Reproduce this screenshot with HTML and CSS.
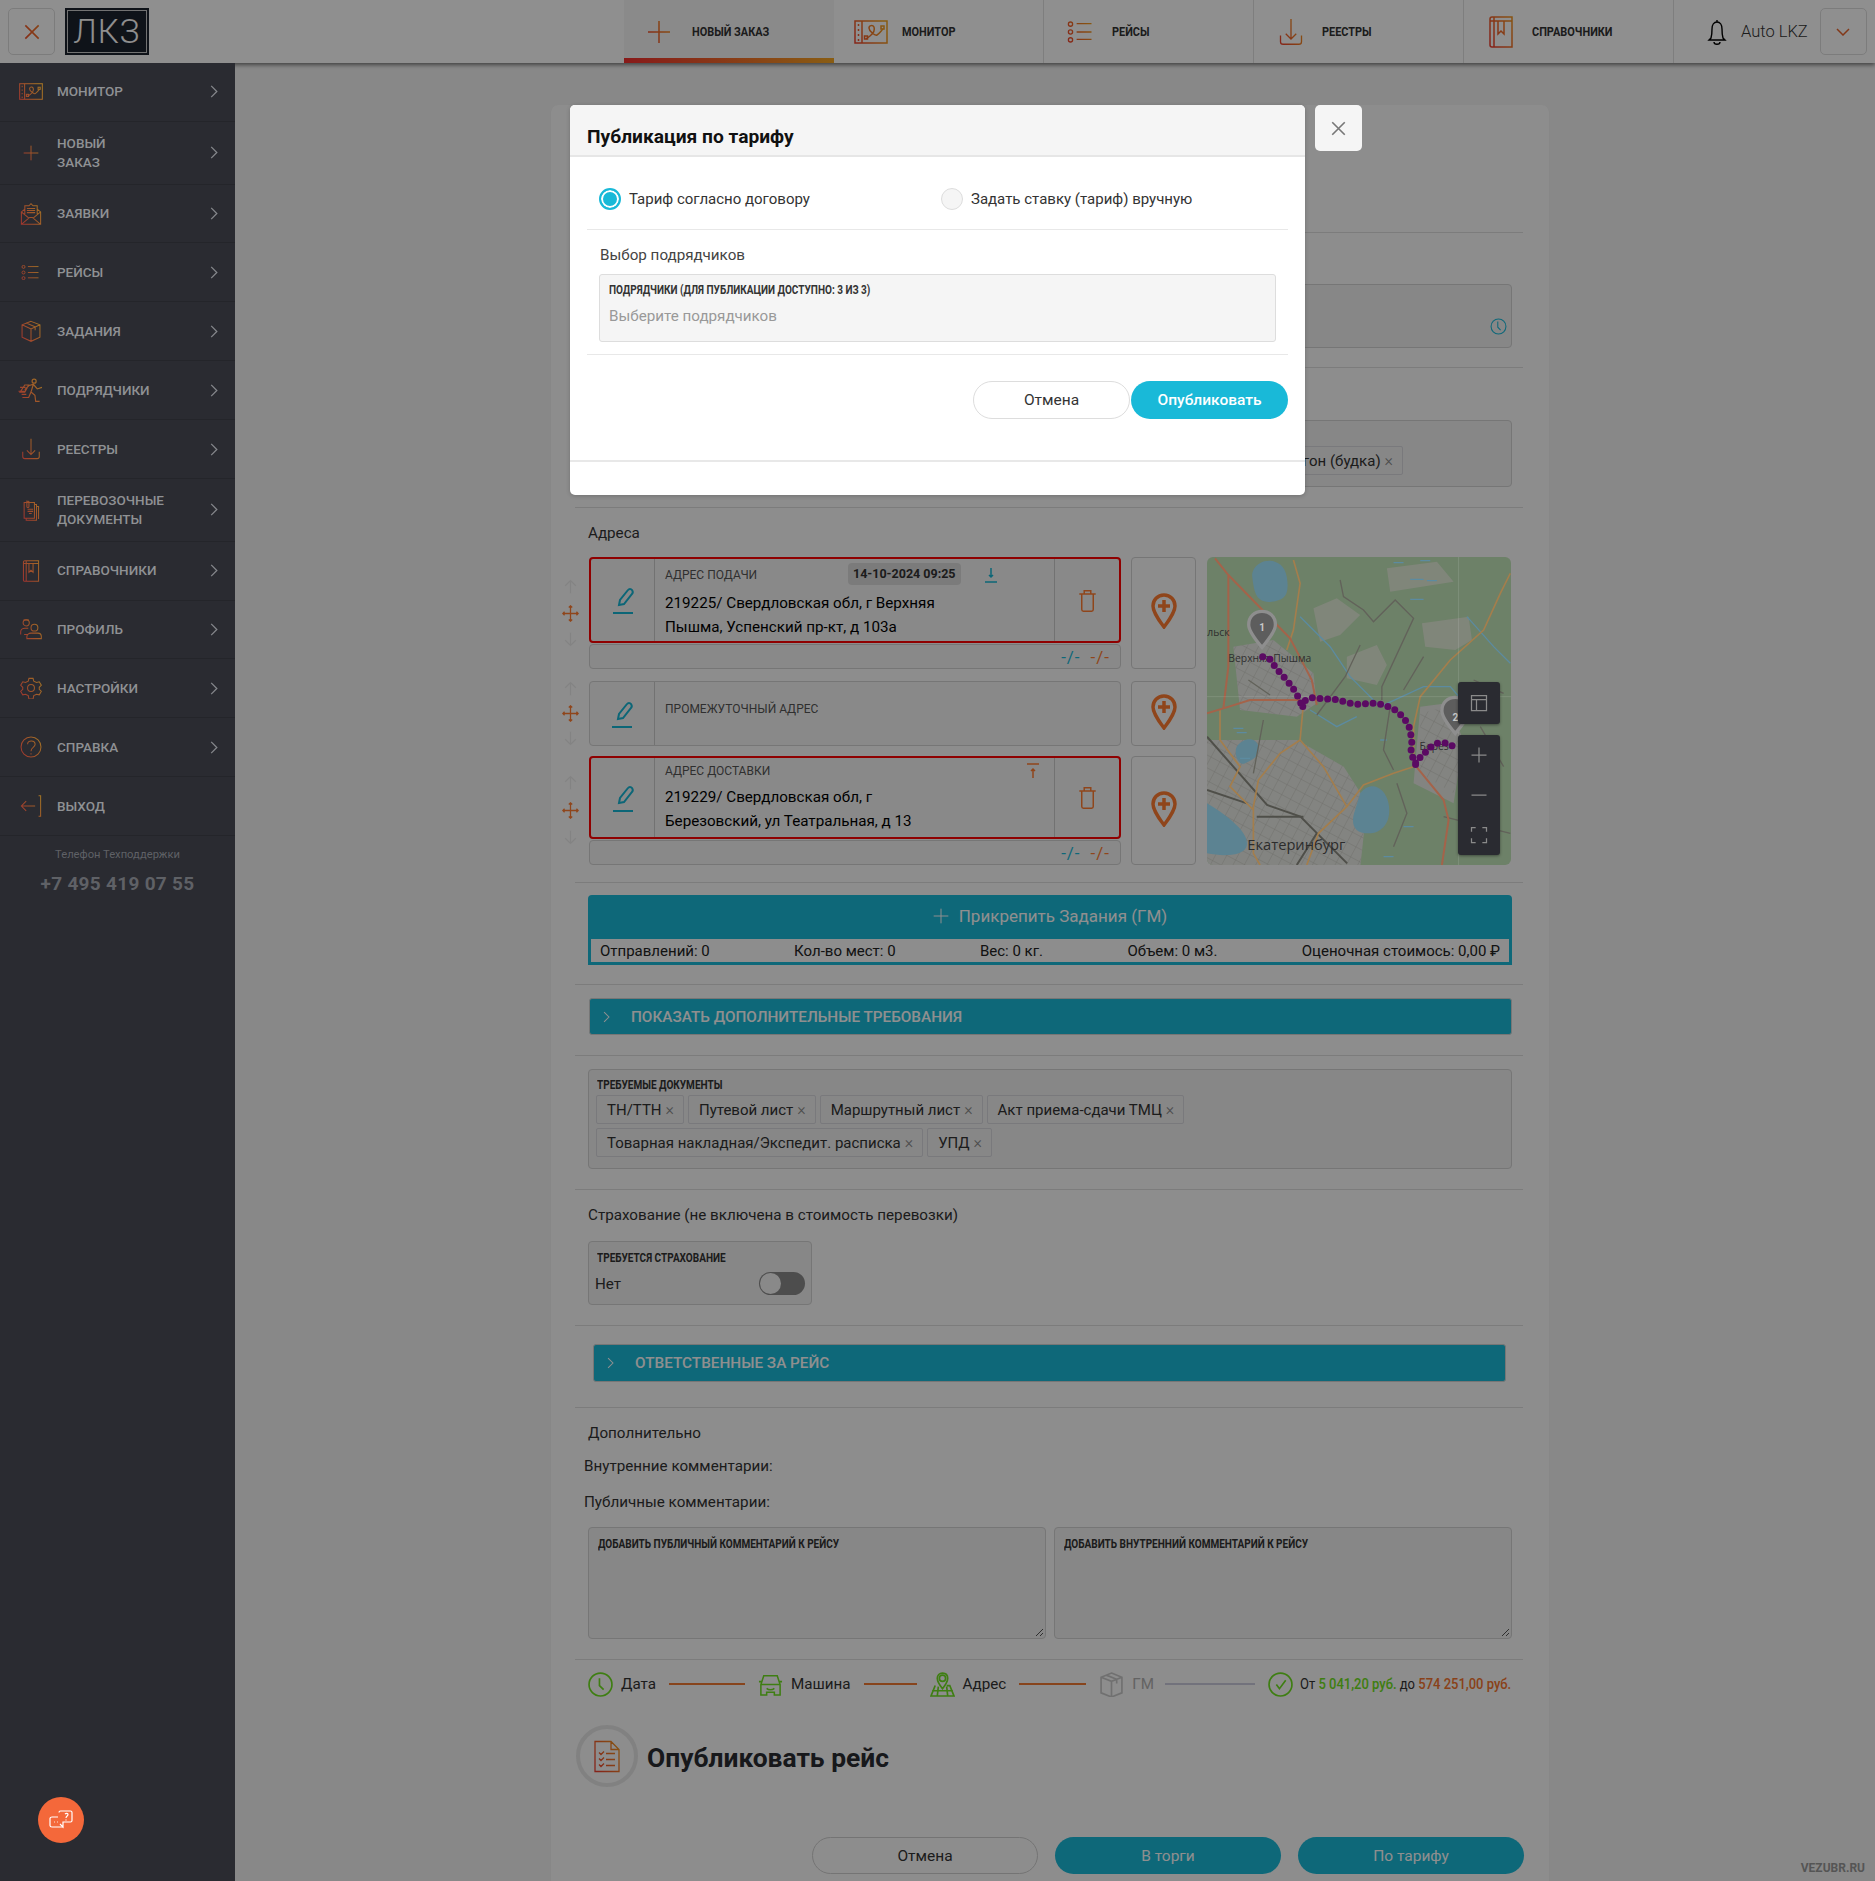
FILE: index.html
```html
<!DOCTYPE html>
<html lang="ru">
<head>
  <meta charset="utf-8">
  <title>Публикация по тарифу</title>
  <link rel="stylesheet" href="styles.css">
</head>
<body>
  <svg class="defs" aria-hidden="true">
    <defs>
      <linearGradient id="ig" gradientUnits="userSpaceOnUse" x1="0" y1="24" x2="32" y2="8">
        <stop offset="0" stop-color="#ee3f2e"/>
        <stop offset="1" stop-color="#f2a21e"/>
      </linearGradient>
      <pattern id="streets" width="30" height="34" patternUnits="userSpaceOnUse" patternTransform="rotate(28)">
        <path d="M0 0h30M0 0v34" stroke="#6e6e6a" stroke-width="2.500" fill="none"/>
      </pattern>
      <symbol id="i-monitor" viewBox="0 0 34 24"><rect x="1" y="1" width="32" height="22"/><path d="M8 1v22M4.500 4v2M4.500 9v2M4.500 14v2M4.500 19v2M12 19l4-3c4-3 5-6 4-9-1-2-5-2-5 1 0 3 6 8 8 7s4-4 6-6"/><rect x="10.500" y="16" width="3" height="3"/><rect x="27" y="6" width="3" height="3"/></symbol>
      <symbol id="i-plus" viewBox="0 0 24 24"><path d="M12 1v22M1 12h22"/></symbol>
      <symbol id="i-list" viewBox="0 0 32 24"><circle cx="4" cy="3" r="2.400"/><circle cx="4" cy="12" r="2.400"/><circle cx="4" cy="21" r="2.400"/><path d="M11 2.500h17M11 12h17M11 20.500h17"/></symbol>
      <symbol id="i-down" viewBox="0 0 32 32"><path d="M16 1v23M10 18l6 6 6-6M4 20v7c0 2 1 3 3 3h18c2 0 3-1 3-3v-7"/></symbol>
      <symbol id="i-book" viewBox="0 0 24 32"><path d="M3 1h20v30H3c-1 0-2-1-2-2V3c0-1 1-2 2-2zM1 5h22M5 1v30M9 5v13l3-3 3 3V5"/></symbol>
      <symbol id="i-mail" viewBox="0 0 32 32"><path d="M2 13v18h28V13l-5-4M7 9l-5 4 11 9M30 13l-11 9M2 31l12-10h4l12 10M7 16V4h6l3-3 3 3h6v12M10 8h12M10 11h12M10 14h12"/></symbol>
      <symbol id="i-box" viewBox="0 0 32 32"><path d="M16 2l13 5v18l-13 6-13-6V7zM3 7l13 6 13-6M16 13v18M9 4.500l13 5.500v5"/></symbol>
      <symbol id="i-run" viewBox="0 0 34 32"><circle cx="21" cy="4" r="2.600"/><path d="M14 10l6-2 5 6 6-2M20 8l-3 10 5 4 1 8 5 0M17 18l-3 7-8 0M14 10l-5 5M3 12h7M1 17h8M5 21h6M9 9h5l-5 9H3z"/></symbol>
      <symbol id="i-docs" viewBox="0 0 24 32"><path d="M2 5h15v23H2zM17 8h3v23H5v-3M20 11h3v18M6 2v9c0 2 3 2 3 0V4c0-1-2-1-2 0M7 15h8M7 18h8M9 21h4"/></symbol>
      <symbol id="i-users" viewBox="0 0 32 32"><circle cx="9" cy="7" r="4.500"/><path d="M1 24v-4c0-3 3-5 6-5h5M5 3h8"/><circle cx="21" cy="14" r="5"/><path d="M10 30v-3c0-3 3-5 6-5h10c3 0 5 2 5 5v3zM6 24h6"/></symbol>
      <symbol id="i-gear" viewBox="0 0 32 32"><circle cx="16" cy="16" r="5"/><path d="M13 2h6l1 4 4 2 4-1 3 5-3 3v3l3 3-3 5-4-1-4 2-1 5h-6l-1-5-4-2-4 1-3-5 3-3v-3l-3-3 3-5 4 1 4-2z"/></symbol>
      <symbol id="i-help" viewBox="0 0 32 32"><circle cx="16" cy="16" r="14.500"/><path d="M11 12c0-7 11-6 11 0 0 5-6 4-6 10M16 25v2"/></symbol>
      <symbol id="i-exit" viewBox="0 0 32 32"><path d="M27 1h3v30h-3M2 16h20M9 9l-7 7 7 7"/></symbol>
      <symbol id="i-chev" viewBox="0 0 10 16"><path d="M1.500 1l7 7-7 7"/></symbol>
      <symbol id="i-edit" viewBox="0 0 24 28"><path d="M8 18l1-5 8-10c1-1.500 3-1.500 4 0s1 3 0 4l-8 10zM2 26h20"/></symbol>
      <symbol id="i-trash" viewBox="0 0 22 28"><path d="M1 6h20M4 6v19c0 1 1 2 2 2h10c1 0 2-1 2-2V6M7 6V2h8v4"/></symbol>
      <symbol id="i-pin" viewBox="0 0 26 36"><path d="M13 2C6.500 2 2 7 2 13c0 7 11 21 11 21s11-14 11-21C24 7 19.500 2 13 2z"/><path d="M13 7v12M7 13h12"/></symbol>
      <symbol id="i-move" viewBox="0 0 20 20"><path d="M10 1v18M1 10h18M8 3l2-2 2 2M8 17l2 2 2-2M3 8l-2 2 2 2M17 8l2 2-2 2"/></symbol>
      <symbol id="i-up" viewBox="0 0 16 20"><path d="M8 19V2M1 9l7-7 7 7"/></symbol>
      <symbol id="i-dn" viewBox="0 0 16 20"><path d="M8 1v17M1 11l7 7 7-7"/></symbol>
      <symbol id="i-load" viewBox="0 0 14 16"><path d="M7 1v9M5 8l2 2 2-2M1 15h12"/></symbol>
      <symbol id="i-unload" viewBox="0 0 14 16"><path d="M1 1h12M7 15V6M5 8l2-2 2 2"/></symbol>
      <symbol id="i-x" viewBox="0 0 12 12"><path d="M1 1l10 10M11 1L1 11"/></symbol>
      <symbol id="i-clock" viewBox="0 0 24 24"><circle cx="12" cy="12" r="10.500"/><path d="M11 5v8l4 4"/></symbol>
    </defs>
  </svg>

  <header class="topbar">
    <button class="sq-btn"><svg class="ic-x"><use href="#i-x"/></svg></button>
    <div class="logo"><span>ЛКЗ</span></div>
    <nav class="topnav">
      <a class="tab tab-active"><svg class="tab-ico w24"><use href="#i-plus"/></svg><span>Новый заказ</span></a>
      <a class="tab"><svg class="tab-ico w34"><use href="#i-monitor"/></svg><span>Монитор</span></a>
      <a class="tab"><svg class="tab-ico w28"><use href="#i-list"/></svg><span>Рейсы</span></a>
      <a class="tab"><svg class="tab-ico w28 tall"><use href="#i-down"/></svg><span>Реестры</span></a>
      <a class="tab"><svg class="tab-ico w28 tall"><use href="#i-book"/></svg><span>Справочники</span></a>
    </nav>
    <div class="user">
      <svg class="bell" viewBox="0 0 24 28"><path d="M12 2v2M6 20c1-3 1-6 1-9 0-4 2-7 5-7s5 3 5 7c0 3 0 6 1 9l2 2H4zM9 24c0 3 6 3 6 0"/></svg>
      <span>Auto LKZ</span>
      <button class="sq-btn"><svg class="ic-v" viewBox="0 0 14 8"><path d="M1 1l6 6 6-6"/></svg></button>
    </div>
  </header>

  <div class="layout">
    <aside class="sidebar">
      <a class="side-item"><svg class="side-ico side-wide"><use href="#i-monitor"/></svg><span>Монитор</span><svg class="chev"><use href="#i-chev"/></svg></a>
      <a class="side-item two"><svg class="side-ico side-plus"><use href="#i-plus"/></svg><span>Новый<br>заказ</span><svg class="chev"><use href="#i-chev"/></svg></a>
      <a class="side-item"><svg class="side-ico"><use href="#i-mail"/></svg><span>Заявки</span><svg class="chev"><use href="#i-chev"/></svg></a>
      <a class="side-item"><svg class="side-ico side-list"><use href="#i-list"/></svg><span>Рейсы</span><svg class="chev"><use href="#i-chev"/></svg></a>
      <a class="side-item"><svg class="side-ico"><use href="#i-box"/></svg><span>Задания</span><svg class="chev"><use href="#i-chev"/></svg></a>
      <a class="side-item"><svg class="side-ico side-run"><use href="#i-run"/></svg><span>Подрядчики</span><svg class="chev"><use href="#i-chev"/></svg></a>
      <a class="side-item"><svg class="side-ico"><use href="#i-down"/></svg><span>Реестры</span><svg class="chev"><use href="#i-chev"/></svg></a>
      <a class="side-item two"><svg class="side-ico"><use href="#i-docs"/></svg><span>Перевозочные<br>документы</span><svg class="chev"><use href="#i-chev"/></svg></a>
      <a class="side-item"><svg class="side-ico"><use href="#i-book"/></svg><span>Справочники</span><svg class="chev"><use href="#i-chev"/></svg></a>
      <a class="side-item"><svg class="side-ico"><use href="#i-users"/></svg><span>Профиль</span><svg class="chev"><use href="#i-chev"/></svg></a>
      <a class="side-item"><svg class="side-ico"><use href="#i-gear"/></svg><span>Настройки</span><svg class="chev"><use href="#i-chev"/></svg></a>
      <a class="side-item"><svg class="side-ico"><use href="#i-help"/></svg><span>Справка</span><svg class="chev"><use href="#i-chev"/></svg></a>
      <a class="side-item"><svg class="side-ico"><use href="#i-exit"/></svg><span>Выход</span></a>
      <div class="support">
        <div class="support-label">Телефон Техподдержки</div>
        <div class="support-phone">+7 495 419 07 55</div>
      </div>
    </aside>

    <main class="main">
      <section class="card">
        <div class="sec sec-head"></div>

        <div class="sec sec-date">
          <div class="box box-date"><svg class="clock-teal"><use href="#i-clock"/></svg></div>
        </div>

        <div class="sec sec-type">
          <div class="box box-type"><span class="tag tag-cut">Фургон (будка) <i>×</i></span></div>
        </div>

        <div class="sec sec-addr">
          <div class="sec-title">Адреса</div>
          <div class="addr-grid">
            <div class="addr-list">
              <div class="addr-row row-1">
                <div class="handle"><svg class="h-arrow"><use href="#i-up"/></svg><svg class="h-move"><use href="#i-move"/></svg><svg class="h-arrow"><use href="#i-dn"/></svg></div>
                <div class="addr-main">
                  <div class="addr-box err box-1">
                    <div class="addr-edit"><svg class="ic-edit"><use href="#i-edit"/></svg></div>
                    <div class="addr-text">
                      <div class="addr-label"><span>Адрес подачи</span><b class="addr-date">14-10-2024 09:25</b><svg class="ic-load teal"><use href="#i-load"/></svg></div>
                      <div class="addr-value">219225/ Свердловская обл, г Верхняя<br>Пышма, Успенский пр-кт, д 103а</div>
                    </div>
                    <div class="addr-del"><svg class="ic-trash"><use href="#i-trash"/></svg></div>
                  </div>
                  <div class="addr-sub"><span class="t">-/-</span><span class="o">-/-</span></div>
                </div>
                <div class="pin-box"><svg class="ic-pin"><use href="#i-pin"/></svg></div>
              </div>

              <div class="addr-row row-2">
                <div class="handle"><svg class="h-arrow"><use href="#i-up"/></svg><svg class="h-move"><use href="#i-move"/></svg><svg class="h-arrow"><use href="#i-dn"/></svg></div>
                <div class="addr-main">
                  <div class="addr-box box-2">
                    <div class="addr-edit"><svg class="ic-edit"><use href="#i-edit"/></svg></div>
                    <div class="addr-text"><div class="addr-label mid"><span>Промежуточный адрес</span></div></div>
                  </div>
                </div>
                <div class="pin-box"><svg class="ic-pin"><use href="#i-pin"/></svg></div>
              </div>

              <div class="addr-row row-3">
                <div class="handle"><svg class="h-arrow"><use href="#i-up"/></svg><svg class="h-move"><use href="#i-move"/></svg><svg class="h-arrow"><use href="#i-dn"/></svg></div>
                <div class="addr-main">
                  <div class="addr-box err box-3">
                    <div class="addr-edit"><svg class="ic-edit"><use href="#i-edit"/></svg></div>
                    <div class="addr-text">
                      <div class="addr-label"><span>Адрес доставки</span><svg class="ic-load orange"><use href="#i-unload"/></svg></div>
                      <div class="addr-value">219229/ Свердловская обл, г<br>Березовский, ул Театральная, д 13</div>
                    </div>
                    <div class="addr-del"><svg class="ic-trash"><use href="#i-trash"/></svg></div>
                  </div>
                  <div class="addr-sub"><span class="t">-/-</span><span class="o">-/-</span></div>
                </div>
                <div class="pin-box"><svg class="ic-pin"><use href="#i-pin"/></svg></div>
              </div>
            </div>

            <div class="map">
              <svg class="map-svg" viewBox="51 51 911 924" preserveAspectRatio="none">
                <rect x="51" y="51" width="911" height="924" fill="#6d8168"/>
                <path d="M370 205l70-30 70 50-60 60-60 20zM470 350l90-35 30 60-30 60-90-20zM695 250l140-20 10 70-50 30-90-10zM590 85l150-20 50 60-190 30z" fill="#80867a"/>
                <path d="M130 320l120-20 120 100 10 90-60 40-170-20zM51 600l270 0 140 80 70 110-20 185H51zM690 500l80-10 50 110-30 190-120-60z" fill="#838481"/>
                <path d="M130 320l120-20 120 100 10 90-60 40-170-20zM51 600l270 0 140 80 70 110-20 185H51zM690 520l80-20 50 110-30 150-100-60z" fill="url(#streets)"/>
                <path d="M190 90c20-40 90-40 100 20s-10 70-45 75-50-15-55-50 -5-30 0-45zM510 760c30-40 75-20 85 30s-15 90-60 90-55-30-40-70zM51 790c50 30 120 80 120 120s-70 40-120 30zM140 620c20-30 60-30 65 0s-20 40-40 50-35-30-25-50z" fill="#5c8392"/>
                <g fill="none" stroke="#5c8ba0" stroke-width="4">
                  <path d="M330 230l90 90 60 90 90 90 130-60 80 0 60 70M830 230l80 90 50 50M360 510l80 50 60-30"/>
                  <path d="M610 68h30M690 62h30M660 118h40M710 122h30M660 178h40M130 565h30M140 578h30M150 655h30M570 600h20M640 860h30M580 950h30"/>
                </g>
                <g fill="none" stroke="#62625a" stroke-width="4">
                  <path d="M450 120l10 50 60 40 30 35 65-65 55 55-95 205 0 40M510 315l-45 95-85 115M220 540l-30 160M175 420l65 45M760 830l200 50M600 500l-20 130 30 60M700 350l-60 100M870 560l70 120M850 420l90 40M620 730l30 90-40 100"/>
                  <path d="M51 590l180 205 100 35 50 50 90 90" stroke="#4f4f49" stroke-width="6"/>
                  <path d="M200 830h140M51 750l120 40M380 880l-60 95" stroke="#4f4f49" stroke-width="6"/>
                </g>
                <g fill="none" stroke="#a47e4c" stroke-width="5">
                  <path d="M310 60l20 70-20 140-20 60M960 100l-30 60-50 110-100 90-90 110-20 90v120l-60 20-90 35-50 65-85 80-35 95M330 600l-60 40-65 80-15 80v140l20 35M330 600l70 80 70 120M90 510v90l60 80-30 60 70 70M330 600l10-110"/>
                </g>
                <g fill="none" stroke="#a4634a" stroke-width="6">
                  <path d="M75 55l40 50 185 190 65 125 15 75M115 105v275l-15 125M51 520l49-15 80-25h150M680 682l80 98 15 60-20 135"/>
                </g>
                <path d="M51 470h911M805 51v924" stroke="#ffffff" stroke-opacity=".18" stroke-width="2"/>
                <text x="52" y="288" class="map-lbl">льск</text>
                <text x="115" y="366" class="map-lbl">Верхняя Пышма</text>
                <text x="688" y="630" class="map-lbl">Берез</text>
                <text x="172" y="930" class="map-city">Екатеринбург</text>
                <path d="M216 322c-30-35-40-55-40-68 0-25 18-40 40-40s40 15 40 40c0 13-10 33-40 68z" fill="#5d5d5d" stroke="#8e8e8e" stroke-width="10"/>
                <text x="216" y="272" class="map-num">1</text>
                <path d="M795 580c-30-35-40-55-40-68 0-25 18-40 40-40s40 15 40 40c0 13-10 33-40 68z" fill="#5d5d5d" stroke="#8e8e8e" stroke-width="10"/>
                <text x="795" y="543" class="map-num">2</text>
                <polyline class="route" points="218,350 240,358 252,376 268,396 285,415 300,433 316,456 328,478 338,505 338,485 362,473 388,475 412,477 438,479 462,485 486,491 510,493 536,490 560,489 585,497 608,505 628,520 645,540 657,562 662,585 665,610 662,635 670,660 680,682 675,665 695,648 712,630 732,612 752,608 773,610 793,622"/>
              </svg>
              <div class="map-ctl ctl-1"><svg viewBox="0 0 24 24"><path d="M3 3h18v18H3zM3 8h18M9 8v13"/></svg></div>
              <div class="map-ctl ctl-2">
                <svg viewBox="0 0 24 24"><path d="M12 3v18M3 12h18"/></svg>
                <svg viewBox="0 0 24 24"><path d="M3 12h18"/></svg>
                <svg viewBox="0 0 24 24"><path d="M8 3H3v5M16 3h5v5M8 21H3v-5M16 21h5v-5"/></svg>
              </div>
            </div>
          </div>
        </div>

        <div class="sec sec-attach">
          <button class="attach"><svg class="attach-plus"><use href="#i-plus"/></svg>Прикрепить Задания (ГМ)</button>
          <div class="attach-info">
            <span>Отправлений: 0</span><span>Кол-во мест: 0</span><span>Вес: 0 кг.</span><span>Объем: 0 м3.</span><span>Оценочная стоимось: 0,00 ₽</span>
          </div>
        </div>

        <div class="sec sec-acc1">
          <div class="accordion"><svg class="acc-chev"><use href="#i-chev"/></svg>Показать дополнительные требования</div>
        </div>

        <div class="sec sec-docs">
          <div class="box box-docs">
            <div class="mini-label">Требуемые документы</div>
            <div class="tags">
              <span class="tag">ТН/ТТН <i>×</i></span>
              <span class="tag">Путевой лист <i>×</i></span>
              <span class="tag">Маршрутный лист <i>×</i></span>
              <span class="tag">Акт приема-сдачи ТМЦ <i>×</i></span>
              <span class="tag">Товарная накладная/Экспедит. расписка <i>×</i></span>
              <span class="tag">УПД <i>×</i></span>
            </div>
          </div>
        </div>

        <div class="sec sec-ins">
          <div class="sec-title">Страхование (не включена в стоимость перевозки)</div>
          <div class="box box-ins">
            <div class="mini-label">Требуется страхование</div>
            <div class="ins-row"><span>Нет</span><span class="toggle"></span></div>
          </div>
        </div>

        <div class="sec sec-acc2">
          <div class="accordion acc-narrow"><svg class="acc-chev"><use href="#i-chev"/></svg>Ответственные за рейс</div>
        </div>

        <div class="sec sec-extra">
          <div class="sec-title">Дополнительно</div>
          <div class="comment-line first">Внутренние комментарии:</div>
          <div class="comment-line">Публичные комментарии:</div>
          <div class="comment-grid">
            <div class="box box-note"><div class="mini-label">Добавить публичный комментарий к рейсу</div><svg class="resize" viewBox="0 0 8 8"><path d="M1 8l7-7M5 8l3-3"/></svg></div>
            <div class="box box-note"><div class="mini-label">Добавить внутренний комментарий к рейсу</div><svg class="resize" viewBox="0 0 8 8"><path d="M1 8l7-7M5 8l3-3"/></svg></div>
          </div>
        </div>

        <div class="progress">
          <svg class="pg-ico green" viewBox="0 0 24 24"><circle cx="12" cy="12" r="11"/><path d="M11 6v7l4 4"/></svg>
          <span class="pg-txt">Дата</span>
          <i class="pg-line l1"></i>
          <svg class="pg-ico green" viewBox="0 0 26 24"><path d="M6 3h14l3 9v11h-6v-3H9v3H3V12zM3 12h20M1 9h3M22 9h3M9 16c2 2 6 2 8 0"/></svg>
          <span class="pg-txt">Машина</span>
          <i class="pg-line l2"></i>
          <svg class="pg-ico green" viewBox="0 0 24 24" preserveAspectRatio="none"><circle cx="12" cy="6" r="3"/><path d="M12 16C8 11 7 9 7 6c0-3 2-5 5-5s5 2 5 5c0 3-1 5-5 10zM5 13L1 23h22l-4-10h-3M2 18h20M8 14l-1 9M16 14l1 9"/></svg>
          <span class="pg-txt">Адрес</span>
          <i class="pg-line l3"></i>
          <svg class="pg-ico gray" viewBox="0 0 24 24"><path d="M12 1l10 4v15l-10 4-10-4V5zM2 5l10 4 10-4M12 9v15M7 3l10 4v4"/></svg>
          <span class="pg-txt muted">ГМ</span>
          <i class="pg-line l4"></i>
          <svg class="pg-ico green thin" viewBox="0 0 24 24"><circle cx="12" cy="12" r="11"/><path d="M8 12l3 4 6-8"/></svg>
          <span class="pg-price">От <b class="ok">5 041,20 руб.</b> до <b class="hot">574 251,00 руб.</b></span>
        </div>

        <div class="publish-head">
          <div class="publish-ico"><svg viewBox="0 0 26 32"><path d="M1 1h16l8 8v22H1zM17 1v8h8M5 12l2 2 3-3M12 13h9M5 18l2 2 3-3M12 19h9M5 24l2 2 3-3M12 25h9"/></svg></div>
          <h1>Опубликовать рейс</h1>
        </div>

        <div class="actions">
          <button class="btn btn-ghost">Отмена</button>
          <button class="btn btn-fill">В торги</button>
          <button class="btn btn-fill">По тарифу</button>
        </div>
      </section>
    </main>
  </div>

  <div class="overlay"></div>

  <div class="modal">
    <div class="modal-head">Публикация по тарифу</div>
    <div class="modal-radios">
      <label class="radio on"><i></i>Тариф согласно договору</label>
      <label class="radio"><i></i>Задать ставку (тариф) вручную</label>
    </div>
    <div class="modal-pick">
      <div class="pick-title">Выбор подрядчиков</div>
      <div class="pick-field">
        <div class="mini-label">Подрядчики (для публикации доступно: 3 из 3)</div>
        <div class="pick-holder">Выберите подрядчиков</div>
      </div>
    </div>
    <div class="modal-btns">
      <button class="mbtn">Отмена</button>
      <button class="mbtn mbtn-go">Опубликовать</button>
    </div>
  </div>
  <button class="modal-close"><svg><use href="#i-x"/></svg></button>

  <button class="chat-fab">
    <svg viewBox="0 0 24 24"><path d="M10 4.500c0-1 .5-1.500 1.500-1.500h10c1 0 1.500.5 1.500 1.500v8c0 1-.5 1.500-1.500 1.500H14v5l-3-3"/><path d="M9 9H3c-1 0-2 .5-2 1.500v7c0 1 1 1.500 2 1.500h11"/><path d="M16 6c1-1 3-1 3 .5S17 8 17 10M17 11.500v1M5 14h.8M8 14h.8"/></svg>
  </button>
  <div class="brand">VEZUBR.RU</div>
</body>
</html>
```

FILE: styles.css
```css
* {
  box-sizing: border-box;
}
html, body {
  margin: 0;
  height: 1881px;
  overflow: hidden;
}
body {
  position: relative;
  background: #f3f3f3;
  color: #222;
  font-family: Roboto, "Noto Sans", sans-serif;
  font-size: 15.2px;
}
button {
  font: inherit;
  cursor: pointer;
}
svg {
  display: block;
  fill: none;
  stroke: url(#ig);
  stroke-width: 1.5;
}
.defs {
  position: absolute;
  width: 0;
  height: 0;
}

/* top bar */
.topbar {
  display: flex;
  align-items: center;
  height: 63px;
  padding-left: 8px;
  background: #fff;
  box-shadow: 0 2px 4px rgba(0,0,0,.5);
  position: relative;
}
.sq-btn {
  width: 47px;
  height: 47px;
  display: flex;
  align-items: center;
  justify-content: center;
  background: transparent;
  border: 1px solid #ddd;
  border-radius: 5px;
  padding: 0;
}
.ic-x {
  width: 16px;
  height: 16px;
  stroke-width: 1.200;
}
.ic-v {
  width: 14px;
  height: 8px;
  stroke: #e8642c;
}
.logo {
  width: 84px;
  height: 47px;
  margin-left: 10px;
  padding: 2px;
  background: #1c232e;
}
.logo span {
  display: flex;
  align-items: center;
  justify-content: center;
  height: 100%;
  border: 1px solid #ccc;
  color: #fff;
  font-size: 33px;
  font-weight: 300;
  letter-spacing: 1px;
}
.topnav {
  display: flex;
  margin-left: 475px;
  height: 63px;
}
.tab {
  display: flex;
  align-items: center;
  width: 210px;
  height: 63px;
  padding-left: 23px;
  border-right: 1px solid #e0e0e0;
  font-size: 13px;
  font-weight: 700;
  color: #333;
  text-transform: uppercase;
  position: relative;
}
.tab span {
  position: absolute;
  left: 68px;
  transform: scaleX(.84);
  transform-origin: left center;
  white-space: nowrap;
}
.tab-active {
  background: #f7f7f7;
  border-right: 0;
}
.tab-active::after {
  content: "";
  position: absolute;
  left: 0;
  right: 0;
  bottom: 0;
  height: 5px;
  background: linear-gradient(90deg, #f22e2e, #f5a623);
}
.tab-ico {
  flex: none;
  height: 24px;
}
.w24 { width: 24px; }
.w28 { width: 28px; }
.w34 { width: 34px; margin-left: -3px; }
.tall { height: 32px; }
.user {
  display: flex;
  align-items: center;
  margin-left: 31px;
  font-size: 16.500px;
  color: #333;
  font-weight: 300;
}
.bell {
  width: 24px;
  height: 28px;
  margin-right: 12px;
  stroke: #000;
  stroke-width: 1.400;
}
.user .sq-btn {
  margin-left: 12px;
}

/* layout */
.layout {
  display: flex;
  height: 1818px;
}
.sidebar {
  width: 235px;
  flex: none;
  background: #2a2b31;
  position: relative;
  z-index: 2;
}
.side-item {
  display: flex;
  align-items: center;
  height: 58.880px;
  padding-left: 14px;
  border-bottom: 1px solid #24252a;
  color: #8f9194;
  font-size: 13.500px;
  font-weight: 500;
  line-height: 19px;
  text-transform: uppercase;
}
.side-item.two {
  height: 62.700px;
}
.side-ico {
  width: 34px;
  height: 22px;
  flex: none;
  margin-right: 9px;
  opacity: .6;
}
.side-wide { height: 17px; }
.side-plus { height: 16px; }
.side-list { height: 15px; }
.side-run { height: 25px; }
.chev {
  width: 8px;
  height: 13px;
  margin-left: auto;
  margin-right: 17px;
  stroke: #85878b;
  stroke-width: 1.600;
}
.support {
  text-align: center;
  padding: 10px 0 0;
}
.support-label {
  color: #5f6166;
  font-size: 11.200px;
  line-height: 18px;
}
.support-phone {
  margin-top: 8px;
  color: #5f6166;
  font-size: 19px;
  font-weight: 700;
  letter-spacing: .3px;
}

/* form card */
.main {
  flex: 1;
  padding: 42px 0 0 315px;
}
.card {
  width: 1000px;
  height: 1800px;
  padding: 0 26px 0 24px;
  background: #fbfbfb;
  border-radius: 8px 8px 0 0;
  border: 1px solid #f0f0f0;
  border-width: 0 1px;
}
.sec {
  border-bottom: 1px solid #ddd;
  padding-left: 13px;
  padding-right: 11px;
}
.sec-head { height: 128px; }
.sec-date { padding-top: 51px; padding-bottom: 19px; }
.sec-type { padding-top: 52px; padding-bottom: 20px; }
.sec-addr { padding-top: 16px; padding-bottom: 17px; }
.sec-attach { padding-top: 12px; padding-bottom: 19px; }
.sec-acc1 { padding-top: 13px; padding-bottom: 20px; }
.sec-docs { padding-top: 13px; padding-bottom: 20px; }
.sec-ins { padding-top: 16px; padding-bottom: 20px; }
.sec-acc2 { padding-top: 18px; padding-bottom: 25px; }
.sec-extra { padding-top: 16px; padding-bottom: 20px; }
.sec-title {
  line-height: 18px;
  color: #333;
}
.box {
  background: #f0f0f0;
  border: 1px solid #d2d2d2;
  border-radius: 4px;
  position: relative;
}
.box-date {
  height: 64px;
}
.clock-teal {
  position: absolute;
  right: 4px;
  bottom: 12px;
  width: 17px;
  height: 17px;
  stroke: #19b9d8;
}
.box-type {
  height: 67px;
  display: flex;
  justify-content: flex-end;
  padding: 25px 108px 0 0;
}
.mini-label {
  font-size: 12px;
  font-weight: 700;
  color: #333;
  text-transform: uppercase;
  line-height: 14px;
  white-space: nowrap;
  transform: scaleX(.835);
  transform-origin: left center;
}
.tag {
  display: inline-flex;
  align-items: center;
  height: 29px;
  padding: 0 9px 0 10px;
  gap: 4px;
  border: 1px solid #d8d8de;
  border-radius: 2px;
  color: #333;
  font-size: 15px;
  white-space: nowrap;
}
.tag i {
  font-style: normal;
  font-weight: 300;
  color: #888;
  font-size: 16px;
}

/* addresses */
.addr-grid {
  display: flex;
  margin-top: 15px;
}
.addr-list {
  width: 636px;
  margin-left: -28px;
  flex: none;
}
.addr-row {
  display: flex;
}
.row-2 { margin-top: 12px; }
.row-3 { margin-top: 10px; }
.handle {
  width: 29px;
  flex: none;
  display: flex;
  flex-direction: column;
  align-items: center;
  justify-content: space-between;
  padding-right: 8px;
}
.row-1 .handle { padding-top: 22px; padding-bottom: 22px; }
.row-3 .handle { padding-top: 19px; padding-bottom: 20px; }
.h-arrow {
  width: 13px;
  height: 15px;
  opacity: .08;
  stroke: #333;
}
.h-move {
  width: 17px;
  height: 17px;
  stroke: #ff7c30;
}
.addr-main {
  width: 532px;
  flex: none;
}
.addr-box {
  display: flex;
  border: 1px solid #d2d2d2;
  background: #f5f5f5;
  border-radius: 4px;
}
.addr-box.err {
  border: 2px solid #ff0000;
}
.box-1 { height: 86px; }
.box-2 { height: 65px; }
.box-3 { height: 83px; }
.addr-edit {
  width: 64px;
  flex: none;
  border-right: 1px solid #ccc;
  display: flex;
  align-items: center;
  justify-content: center;
  padding-top: 2px;
}
.box-2 .addr-edit { width: 65px; }
.ic-edit {
  width: 24px;
  height: 28px;
  stroke: #17b6d4;
  stroke-width: 2;
}
.addr-text {
  flex: 1;
  padding: 8px 0 0 10px;
  min-width: 0;
}
.box-3 .addr-text {
  padding-top: 5px;
}
.addr-label {
  display: flex;
  align-items: center;
  height: 16px;
  color: #555;
  font-size: 12px;
  text-transform: uppercase;
  position: relative;
}
.addr-label.mid {
  margin-top: 11px;
}
.addr-date {
  position: absolute;
  left: 183px;
  top: -4px;
  padding: 3px 5px;
  border-radius: 4px;
  background: #dcdcdc;
  color: #333;
  font-size: 12.500px;
  line-height: 16px;
  white-space: nowrap;
}
.ic-load {
  position: absolute;
  width: 14px;
  height: 16px;
  stroke-width: 1.500;
}
.ic-load.teal {
  left: 319px;
  stroke: #17b6d4;
}
.ic-load.orange {
  right: 14px;
  stroke: #ff7c30;
}
.addr-value {
  margin-top: 8px;
  line-height: 24px;
  color: #000;
  white-space: nowrap;
}
.box-3 .addr-value {
  margin-top: 6px;
}
.addr-del {
  width: 65px;
  flex: none;
  border-left: 1px solid #ccc;
  display: flex;
  align-items: center;
  justify-content: center;
}
.ic-trash {
  width: 19px;
  height: 23px;
  stroke: #ff7c30;
  stroke-width: 1.800;
}
.addr-sub {
  height: 25px;
  margin-top: 1px;
  border: 1px solid #d2d2d2;
  border-radius: 4px;
  background: #f5f5f5;
  display: flex;
  justify-content: flex-end;
  align-items: center;
  gap: 10px;
  padding-right: 10px;
  font-size: 17px;
  letter-spacing: 1px;
}
.addr-sub .t { color: #19b9d8; }
.addr-sub .o { color: #ff7c30; }
.pin-box {
  width: 65px;
  margin-left: 10px;
  flex: none;
  border: 1px solid #d2d2d2;
  border-radius: 4px;
  display: flex;
  align-items: center;
  justify-content: center;
  padding-bottom: 4px;
}
.ic-pin {
  width: 26px;
  height: 36px;
  stroke: #ff7c30;
  stroke-width: 3.500;
}
.map {
  width: 304px;
  height: 308px;
  margin-left: 11px;
  border-radius: 6px;
  overflow: hidden;
  position: relative;
  z-index: 2;
}
.map-svg {
  width: 100%;
  height: 100%;
  stroke: none;
}
.map-lbl {
  font-family: "Open Sans", sans-serif;
  font-size: 31px;
  fill: #2f2f2f;
  stroke: none;
}
.map-city {
  font-family: "Open Sans", sans-serif;
  font-size: 44px;
  fill: #2c2c2c;
  stroke: none;
}
.map-num {
  font-family: Roboto, sans-serif;
  font-size: 30px;
  font-weight: 700;
  text-anchor: middle;
  fill: #c8c8c8;
  stroke: none;
}
.route {
  fill: none;
  stroke: #5b0a63;
  stroke-width: 21;
  stroke-linecap: round;
  stroke-dasharray: 0 23;
}
.map-ctl {
  position: absolute;
  left: 251px;
  width: 42px;
  background: #2a2b31;
  border-radius: 3px;
  display: flex;
  flex-direction: column;
  align-items: center;
  justify-content: space-around;
  box-shadow: 0 1px 3px rgba(0,0,0,.4);
}
.map-ctl svg {
  width: 20px;
  height: 20px;
  stroke: #8a8a8a;
  stroke-width: 1.500;
}
.ctl-1 { top: 125px; height: 42px; }
.ctl-2 { top: 178px; height: 120px; }

/* attach + accordions */
.attach {
  display: flex;
  align-items: center;
  justify-content: center;
  width: 100%;
  height: 42px;
  border: 0;
  border-radius: 4px 4px 0 0;
  background: #19b9d8;
  color: #fff;
  font-size: 17px;
  font-weight: 400;
}
.attach-plus {
  width: 16px;
  height: 16px;
  margin-right: 10px;
  stroke: #fff;
}
.attach-info {
  display: flex;
  justify-content: space-between;
  height: 28px;
  align-items: center;
  padding: 0 9px;
  border: 3px solid #19b9d8;
  border-top-width: 2px;
  color: #222;
  font-size: 15px;
}
.accordion {
  display: flex;
  align-items: center;
  height: 37px;
  padding-left: 13px;
  margin-left: 1px;
  background: #19b9d8;
  border: 1px solid #d2d2d2;
  border-radius: 3px;
  color: #fff;
  font-size: 15.300px;
  font-weight: 500;
  text-transform: uppercase;
}
.acc-chev {
  width: 7px;
  height: 12px;
  margin-right: 21px;
  stroke: #fff;
}
.acc-narrow {
  height: 38px;
  margin: 0 6px 0 5px;
}

/* docs */
.box-docs {
  height: 100px;
  padding: 8px 6px 0 8px;
}
.tags {
  display: flex;
  flex-wrap: wrap;
  gap: 4px;
  margin: 3px 0 0 -1px;
}
.box-ins {
  width: 224px;
  height: 64px;
  margin-top: 17px;
  padding: 9px 6px 0 8px;
}
.ins-row {
  display: flex;
  justify-content: space-between;
  align-items: center;
  margin: 7px 0 0 -2px;
  color: #333;
}
.toggle {
  width: 46px;
  height: 23px;
  border-radius: 12px;
  background: #8a8a8a;
  position: relative;
}
.toggle::before {
  content: "";
  position: absolute;
  left: 1px;
  top: 1px;
  width: 21px;
  height: 21px;
  border-radius: 50%;
  background: #f4f4f4;
}

/* extra */
.comment-line {
  margin: 18px 0 0 -4px;
  line-height: 18px;
  color: #333;
}
.comment-line.first { margin-top: 15px; }
.comment-grid {
  display: grid;
  grid-template-columns: 458px 458px;
  gap: 8px;
  margin-top: 16px;
}
.box-note {
  height: 112px;
  padding: 9px 9px 0;
}
.resize {
  position: absolute;
  right: 2px;
  bottom: 2px;
  width: 8px;
  height: 8px;
  stroke: #555;
  stroke-width: 1;
}

/* progress */
.progress {
  display: flex;
  align-items: center;
  height: 32px;
  margin-top: 8px;
  padding-left: 13px;
  white-space: nowrap;
}
.pg-ico {
  width: 25px;
  height: 25px;
  flex: none;
  stroke-width: 1.600;
}
.pg-ico.green { stroke: #6fe020; }
.pg-ico.gray { stroke: #c8c8c8; }
.pg-txt {
  flex: none;
  margin-left: 8px;
  color: #333;
}
.pg-txt.muted { color: #b0b0b0; }
.pg-line {
  flex: none;
  height: 2px;
  background: #f07a33;
  margin: 0 13px;
}
.l1 { width: 76px; }
.l2 { width: 53px; }
.l3 { width: 67px; }
.l4 { width: 90px; margin-left: 11px; background: #ccd; }
.pg-price {
  flex: none;
  margin-left: 7px;
  color: #333;
  transform: scaleX(.855);
  transform-origin: left center;
}
.pg-price b { font-weight: 500; }
.ok { color: #6fe020; }
.hot { color: #f5752f; }

.publish-head {
  display: flex;
  align-items: center;
  margin-top: 25px;
  margin-left: 1px;
}
.publish-ico {
  width: 62px;
  height: 62px;
  border: 4px solid #e6e6e6;
  border-radius: 50%;
  display: flex;
  align-items: center;
  justify-content: center;
}
.publish-ico svg {
  width: 26px;
  height: 33px;
  stroke-width: 1.300;
}
.publish-head h1 {
  margin: 0 0 0 9px;
  padding-top: 4px;
  color: #2a2b31;
  font-size: 26.400px;
  font-weight: 700;
}
.actions {
  display: flex;
  justify-content: flex-end;
  gap: 17px;
  margin-top: 50px;
  margin-right: -1px;
}
.btn {
  width: 226px;
  height: 37px;
  border-radius: 19px;
  border: 1px solid #cfcfcf;
  background: transparent;
  color: #333;
  font-size: 15.500px;
}
.btn-fill {
  border: 0;
  background: #19b9d8;
  color: #fff;
}

/* overlay and modal */
.overlay {
  position: absolute;
  inset: 0;
  z-index: 1;
  background: rgba(0,0,0,.44);
}
.modal {
  position: absolute;
  left: 570px;
  top: 105px;
  width: 735px;
  height: 390px;
  z-index: 3;
  background: #fff;
  border-radius: 5px;
  box-shadow: 0 1px 4px rgba(0,0,0,.2);
}
.modal-head {
  display: flex;
  align-items: flex-end;
  height: 52px;
  padding: 0 0 7px 17px;
  background: #f5f5f5;
  border-bottom: 2px solid #e6e6e6;
  border-radius: 5px 5px 0 0;
  font-size: 19.200px;
  font-weight: 700;
  color: #111;
}
.modal-radios {
  display: flex;
  height: 73px;
  margin: 0 17px;
  padding: 31px 0 0 12px;
  border-bottom: 1px solid #e8e8e8;
}
.radio {
  display: flex;
  align-items: center;
  height: 22px;
  width: 342px;
  color: #333;
  font-size: 15px;
}
.radio i {
  width: 22px;
  height: 22px;
  margin-right: 8px;
  border-radius: 50%;
  border: 1px solid #ddd;
  background: #f5f5f5;
}
.radio.on i {
  border: 2px solid #19b9d8;
  background: #19b9d8;
  box-shadow: inset 0 0 0 2px #fff;
}
.modal-pick {
  height: 125px;
  margin: 0 17px;
  padding: 16px 12px 0 12px;
  border-bottom: 1px solid #e8e8e8;
}
.pick-title {
  height: 18px;
  margin-left: 1px;
  line-height: 18px;
  color: #444;
}
.pick-field {
  height: 68px;
  margin-top: 10px;
  padding: 8px 9px 0;
  background: #f5f5f5;
  border: 1px solid #ddd;
  border-radius: 3px;
}
.pick-holder {
  margin-top: 10px;
  color: #999;
}
.modal-btns {
  display: flex;
  justify-content: flex-end;
  height: 107px;
  padding: 26px 17px 0 0;
  border-bottom: 2px solid #e8e8e8;
}
.mbtn {
  width: 157px;
  height: 38px;
  border: 1px solid #ddd;
  border-radius: 19px;
  background: #fff;
  color: #333;
  font-size: 15.500px;
  margin-left: 1px;
}
.mbtn-go {
  border: 0;
  background: #19b9d8;
  color: #fff;
  font-weight: 500;
}
.modal-close {
  position: absolute;
  left: 1315px;
  top: 105px;
  width: 47px;
  height: 46px;
  z-index: 3;
  padding: 0;
  border: 0;
  border-radius: 5px;
  background: #f5f5f5;
  display: flex;
  align-items: center;
  justify-content: center;
}
.modal-close svg {
  width: 15px;
  height: 15px;
  stroke: #777;
  stroke-width: 1.300;
}
.chat-fab {
  position: absolute;
  left: 38px;
  top: 1797px;
  width: 46px;
  height: 46px;
  z-index: 3;
  padding: 11px;
  border: 0;
  border-radius: 50%;
  background: #f4683a;
}
.chat-fab svg {
  width: 24px;
  height: 24px;
  stroke: #fff;
  stroke-width: 1.200;
}
.brand {
  position: absolute;
  right: 10px;
  bottom: 6px;
  z-index: 3;
  color: #555;
  font-size: 12px;
  font-weight: 700;
}
```
